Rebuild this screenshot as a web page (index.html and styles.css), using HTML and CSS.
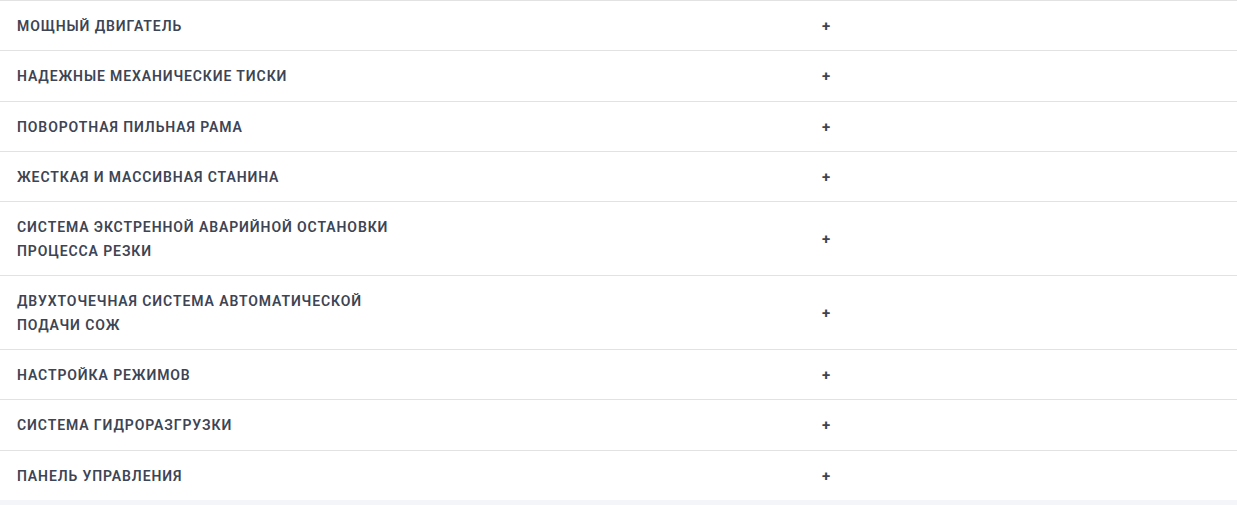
FILE: index.html
```html
<!DOCTYPE html>
<html lang="ru">
<head>
<meta charset="utf-8">
<link rel="stylesheet" href="styles.css">
</head>
<body>
<div class="accordion">
  <div class="row"><div class="title">Мощный двигатель</div><div class="plus">+</div></div>
  <div class="row"><div class="title">Надежные механические тиски</div><div class="plus">+</div></div>
  <div class="row"><div class="title">Поворотная пильная рама</div><div class="plus">+</div></div>
  <div class="row"><div class="title">Жесткая и массивная станина</div><div class="plus">+</div></div>
  <div class="row"><div class="title">Система экстренной аварийной остановки процесса резки</div><div class="plus">+</div></div>
  <div class="row"><div class="title">Двухточечная система автоматической подачи СОЖ</div><div class="plus">+</div></div>
  <div class="row"><div class="title">Настройка режимов</div><div class="plus">+</div></div>
  <div class="row"><div class="title">Система гидроразгрузки</div><div class="plus">+</div></div>
  <div class="row"><div class="title">Панель управления</div><div class="plus">+</div></div>
</div>
</body>
</html>
```
FILE: styles.css
```css
html, body {
  margin: 0;
  padding: 0;
  background: #f4f5f9;
}
body {
  font-family: Roboto, "Noto Sans", sans-serif;
}
.accordion {
  background: #ffffff;
}
.row {
  display: flex;
  align-items: center;
  border-top: 1px solid #e2e2e2;
  padding: 14px 0 12px 17px;
}
.title {
  width: 398px;
  flex: 0 0 398px;
  font-size: 14px;
  font-weight: 600;
  letter-spacing: 0.9px;
  line-height: 23.36px;
  text-transform: uppercase;
  color: #3d4453;
}
.plus {
  flex: 1;
  text-align: center;
  font-size: 15px;
  font-weight: 700;
  line-height: 23.36px;
  color: #3d4453;
}
```
